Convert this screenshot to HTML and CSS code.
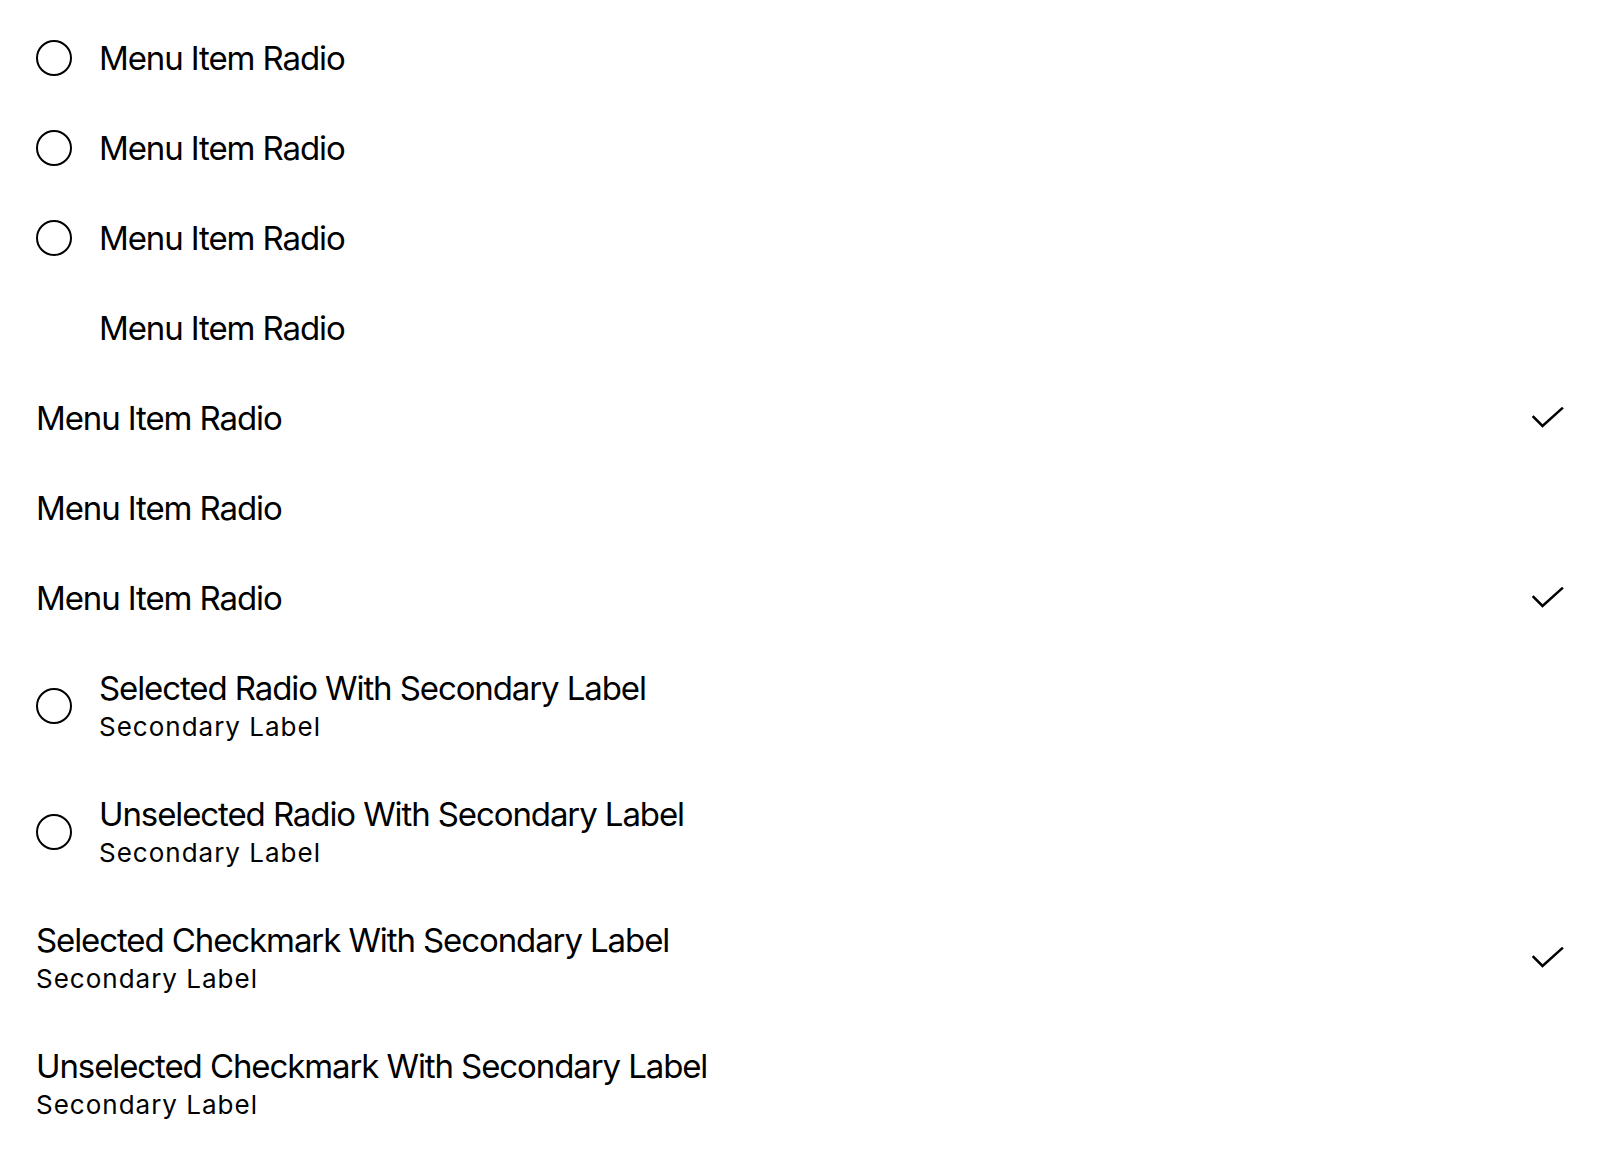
FILE: index.html
```html
<!DOCTYPE html>
<html>
<head>
<meta charset="utf-8">
<link rel="stylesheet" href="styles.css">
</head>
<body>
<div class="menu">
  <div class="item"><span class="radio"></span><div class="text"><div class="primary">Menu Item Radio</div></div></div>
  <div class="item"><span class="radio"></span><div class="text"><div class="primary">Menu Item Radio</div></div></div>
  <div class="item"><span class="radio"></span><div class="text"><div class="primary">Menu Item Radio</div></div></div>
  <div class="item"><span class="radio blank"></span><div class="text"><div class="primary">Menu Item Radio</div></div></div>
  <div class="item"><div class="text"><div class="primary">Menu Item Radio</div></div><svg class="check" viewBox="0 0 32 22"><polyline points="1.5,10 10.5,19 30,1.5"/></svg></div>
  <div class="item"><div class="text"><div class="primary">Menu Item Radio</div></div></div>
  <div class="item"><div class="text"><div class="primary">Menu Item Radio</div></div><svg class="check" viewBox="0 0 32 22"><polyline points="1.5,10 10.5,19 30,1.5"/></svg></div>
  <div class="item two"><span class="radio"></span><div class="text"><div class="primary">Selected Radio With Secondary Label</div><div class="secondary">Secondary Label</div></div></div>
  <div class="item two"><span class="radio"></span><div class="text"><div class="primary">Unselected Radio With Secondary Label</div><div class="secondary">Secondary Label</div></div></div>
  <div class="item two"><div class="text"><div class="primary">Selected Checkmark With Secondary Label</div><div class="secondary">Secondary Label</div></div><svg class="check" viewBox="0 0 32 22"><polyline points="1.5,10 10.5,19 30,1.5"/></svg></div>
  <div class="item two"><div class="text"><div class="primary">Unselected Checkmark With Secondary Label</div><div class="secondary">Secondary Label</div></div></div>
</div>
</body>
</html>
```
FILE: styles.css
```css
html, body {
  margin: 0;
  padding: 0;
  background: #ffffff;
}
body {
  font-family: Inter, "Noto Sans", sans-serif;
  color: #000000;
}
.menu {
  padding: 13px 38px 0 36px;
}
.item {
  display: flex;
  align-items: center;
  height: 90px;
}
.item.two {
  height: 126px;
}
.radio {
  flex: none;
  box-sizing: border-box;
  width: 36px;
  height: 36px;
  border: 2.5px solid #000;
  border-radius: 50%;
  margin-right: 27px;
}
.radio.blank {
  border-color: transparent;
}
.text {
  flex: 1;
  min-width: 0;
}
.primary {
  font-size: 33px;
  line-height: 40px;
  letter-spacing: -1.1px;
  white-space: nowrap;
}
.secondary {
  font-size: 26px;
  line-height: 36px;
  letter-spacing: 1px;
  margin-top: 1px;
  white-space: nowrap;
}
.check {
  flex: none;
  width: 32px;
  height: 22px;
  fill: none;
  stroke: #000;
  stroke-width: 2.5;
  stroke-linecap: square;
}
```
